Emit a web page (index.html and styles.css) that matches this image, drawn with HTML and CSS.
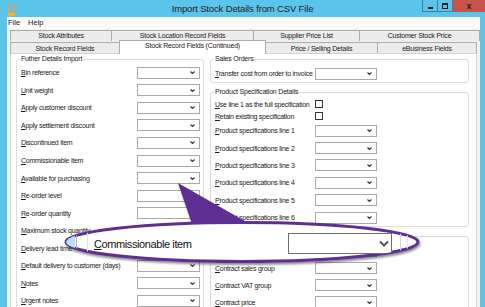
FILE: index.html
```html
<!DOCTYPE html>
<html lang="en">
<head>
  <meta charset="UTF-8" />
  <title>Import Stock Details from CSV File</title>
  <link rel="stylesheet" href="styles.css">
</head>
<body>
<div class="titlebar">
  <div class="app-icon">
    <svg width="7" height="11" viewBox="0 0 7 11">
      <rect x="0.5" y="0.5" width="6" height="7" rx="1.5" fill="none" stroke="#f0a030" stroke-width="1.4"/>
      <rect x="0" y="8" width="7" height="3" fill="#f5b040"/>
    </svg>
  </div>
  <div class="title">Import Stock Details from CSV File</div>
  <div class="win-buttons">
    <div class="wbtn wbtn-min"><span class="glyph-min"></span></div>
    <div class="wbtn wbtn-max"><span class="glyph-max"></span></div>
    <div class="wbtn wbtn-close">x</div>
  </div>
</div>

<div class="client">
  <div class="menubar">
    <span>File</span>
    <span>Help</span>
  </div>

  <div class="tabs">
    <div class="tab-row">
      <div class="tab" style="width:102px">Stock Attributes</div>
      <div class="tab" style="width:143px">Stock Location Record Fields</div>
      <div class="tab" style="width:107px">Supplier Price List</div>
      <div class="tab" style="width:121px">Customer Stock Price</div>
    </div>
    <div class="tab-row tab-row-front">
      <div class="tab" style="width:110px">Stock Record Fields</div>
      <div class="tab tab-active" style="width:147px">Stock Record Fields (Continued)</div>
      <div class="tab" style="width:113px">Price / Selling Details</div>
      <div class="tab" style="width:100px">eBusiness Fields</div>
    </div>
  </div>

  <div class="panel">
    <fieldset class="group group-left">
      <legend>Futher Details Import</legend>
      <div class="rows rows-left">
        <div class="row"><span class="lbl"><u>B</u>in reference</span><div class="combo"><svg class="chev" width="5" height="3" viewBox="0 0 5 3"><polyline points="0.5,0.5 2.5,2.5 4.5,0.5"/></svg></div></div>
        <div class="row"><span class="lbl"><u>U</u>nit weight</span><div class="combo"><svg class="chev" width="5" height="3" viewBox="0 0 5 3"><polyline points="0.5,0.5 2.5,2.5 4.5,0.5"/></svg></div></div>
        <div class="row"><span class="lbl"><u>A</u>pply customer discount</span><div class="combo"><svg class="chev" width="5" height="3" viewBox="0 0 5 3"><polyline points="0.5,0.5 2.5,2.5 4.5,0.5"/></svg></div></div>
        <div class="row"><span class="lbl"><u>A</u>pply settlement discount</span><div class="combo"><svg class="chev" width="5" height="3" viewBox="0 0 5 3"><polyline points="0.5,0.5 2.5,2.5 4.5,0.5"/></svg></div></div>
        <div class="row"><span class="lbl"><u>D</u>iscontinued item</span><div class="combo"><svg class="chev" width="5" height="3" viewBox="0 0 5 3"><polyline points="0.5,0.5 2.5,2.5 4.5,0.5"/></svg></div></div>
        <div class="row"><span class="lbl"><u>C</u>ommissionable item</span><div class="combo"><svg class="chev" width="5" height="3" viewBox="0 0 5 3"><polyline points="0.5,0.5 2.5,2.5 4.5,0.5"/></svg></div></div>
        <div class="row"><span class="lbl"><u>A</u>vailable for purchasing</span><div class="combo"><svg class="chev" width="5" height="3" viewBox="0 0 5 3"><polyline points="0.5,0.5 2.5,2.5 4.5,0.5"/></svg></div></div>
        <div class="row"><span class="lbl"><u>R</u>e-order level</span><div class="combo"></div></div>
        <div class="row"><span class="lbl"><u>R</u>e-order quantity</span><div class="combo"><svg class="chev" width="5" height="3" viewBox="0 0 5 3"><polyline points="0.5,0.5 2.5,2.5 4.5,0.5"/></svg></div></div>
        <div class="row"><span class="lbl"><u>M</u>aximum stock quantity</span><div class="combo"></div></div>
        <div class="row"><span class="lbl"><u>D</u>elivery lead time</span><div class="combo"></div></div>
        <div class="row"><span class="lbl"><u>D</u>efault delivery to customer (days)</span><div class="combo"><svg class="chev" width="5" height="3" viewBox="0 0 5 3"><polyline points="0.5,0.5 2.5,2.5 4.5,0.5"/></svg></div></div>
        <div class="row"><span class="lbl"><u>N</u>otes</span><div class="combo"><svg class="chev" width="5" height="3" viewBox="0 0 5 3"><polyline points="0.5,0.5 2.5,2.5 4.5,0.5"/></svg></div></div>
        <div class="row"><span class="lbl"><u>U</u>rgent notes</span><div class="combo"><svg class="chev" width="5" height="3" viewBox="0 0 5 3"><polyline points="0.5,0.5 2.5,2.5 4.5,0.5"/></svg></div></div>
      </div>
    </fieldset>

    <div class="col-right">
      <fieldset class="group">
        <legend>Sales Orders</legend>
        <div class="rows rows-sales">
          <div class="row row-sales"><span class="lbl"><u>T</u>ransfer cost from order to invoice</span><div class="combo"><svg class="chev" width="5" height="3" viewBox="0 0 5 3"><polyline points="0.5,0.5 2.5,2.5 4.5,0.5"/></svg></div></div>
        </div>
      </fieldset>

      <fieldset class="group">
        <legend>Product Specification Details</legend>
        <div class="rows rows-spec">
          <div class="row row-check"><span class="lbl"><u>U</u>se line 1 as the full specification</span><span class="checkbox"></span></div>
          <div class="row row-check"><span class="lbl"><u>R</u>etain existing specification</span><span class="checkbox"></span></div>
          <div class="row row-spec"><span class="lbl"><u>P</u>roduct specifications line 1</span><div class="combo"><svg class="chev" width="5" height="3" viewBox="0 0 5 3"><polyline points="0.5,0.5 2.5,2.5 4.5,0.5"/></svg></div></div>
          <div class="row row-spec"><span class="lbl"><u>P</u>roduct specifications line 2</span><div class="combo"><svg class="chev" width="5" height="3" viewBox="0 0 5 3"><polyline points="0.5,0.5 2.5,2.5 4.5,0.5"/></svg></div></div>
          <div class="row row-spec"><span class="lbl"><u>P</u>roduct specifications line 3</span><div class="combo"><svg class="chev" width="5" height="3" viewBox="0 0 5 3"><polyline points="0.5,0.5 2.5,2.5 4.5,0.5"/></svg></div></div>
          <div class="row row-spec"><span class="lbl"><u>P</u>roduct specifications line 4</span><div class="combo"><svg class="chev" width="5" height="3" viewBox="0 0 5 3"><polyline points="0.5,0.5 2.5,2.5 4.5,0.5"/></svg></div></div>
          <div class="row row-spec"><span class="lbl"><u>P</u>roduct specifications line 5</span><div class="combo"><svg class="chev" width="5" height="3" viewBox="0 0 5 3"><polyline points="0.5,0.5 2.5,2.5 4.5,0.5"/></svg></div></div>
          <div class="row row-spec"><span class="lbl"><u>P</u>roduct specifications line 6</span><div class="combo"><svg class="chev" width="5" height="3" viewBox="0 0 5 3"><polyline points="0.5,0.5 2.5,2.5 4.5,0.5"/></svg></div></div>
        </div>
      </fieldset>

      <fieldset class="group">
        <legend>Contract Details</legend>
        <div class="rows rows-contract">
          <div class="row row-contract"><span class="lbl"><u>C</u>ontract price list</span><div class="combo"><svg class="chev" width="5" height="3" viewBox="0 0 5 3"><polyline points="0.5,0.5 2.5,2.5 4.5,0.5"/></svg></div></div>
          <div class="row row-contract"><span class="lbl"><u>C</u>ontract sales group</span><div class="combo"><svg class="chev" width="5" height="3" viewBox="0 0 5 3"><polyline points="0.5,0.5 2.5,2.5 4.5,0.5"/></svg></div></div>
          <div class="row row-contract"><span class="lbl"><u>C</u>ontract VAT group</span><div class="combo"><svg class="chev" width="5" height="3" viewBox="0 0 5 3"><polyline points="0.5,0.5 2.5,2.5 4.5,0.5"/></svg></div></div>
          <div class="row row-contract"><span class="lbl"><u>C</u>ontract price</span><div class="combo"><svg class="chev" width="5" height="3" viewBox="0 0 5 3"><polyline points="0.5,0.5 2.5,2.5 4.5,0.5"/></svg></div></div>
        </div>
      </fieldset>
    </div>
  </div>
</div>

<!-- magnified callout over the form -->
<div class="callout">
  <svg class="callout-shape" width="485" height="307" viewBox="0 0 485 307">
    <defs>
      <clipPath id="inside">
        <ellipse cx="242" cy="242" rx="176" ry="19.5"/>
      </clipPath>
      <filter id="shadow" x="-10%" y="-30%" width="120%" height="170%">
        <feDropShadow dx="1" dy="2" stdDeviation="1.3" flood-color="#000" flood-opacity="0.45"/>
      </filter>
    </defs>
    <g filter="url(#shadow)">
      <polygon points="178,183 192,224 250,224" fill="#5f2f93"/>
      <ellipse cx="242" cy="242" rx="176" ry="19.5" fill="#fff" stroke="#5f2f93" stroke-width="3"/>
    </g>
    <g clip-path="url(#inside)">
      <rect x="60" y="220" width="15" height="45" fill="#b8e2f4"/>
      <line x1="76.5" y1="220" x2="76.5" y2="265" stroke="#b5b5b5"/>
      <line x1="87.5" y1="220" x2="87.5" y2="265" stroke="#e2e2e2"/>
      <line x1="400.5" y1="220" x2="400.5" y2="265" stroke="#d6d6d6"/>
      <line x1="407.5" y1="220" x2="407.5" y2="265" stroke="#e4e4e4"/>
      <rect x="288.5" y="233.5" width="103" height="20" fill="#fff" stroke="#6f6f6f"/>
      <polyline points="380,241.5 384,245.5 388,241.5" fill="none" stroke="#555" stroke-width="2"/>
    </g>
  </svg>
  <div class="callout-label"><u>C</u>ommissionable item</div>
</div>
</body>
</html>
```

FILE: styles.css
```css
body {
  margin: 0;
  width: 485px;
  height: 307px;
  overflow: hidden;
  position: relative;
  background: #5bc4ea;
  font-family: 'Liberation Sans', Arial, sans-serif;
  color: #1a1a1a;
}

.titlebar {
  height: 17px;
  display: grid;
  grid-template-columns: 1fr auto 1fr;
}

.app-icon {
  padding: 2px 0 0 8px;
}

.title {
  font-size: 9.5px;
  line-height: 17px;
  letter-spacing: -0.15px;
  color: #1e1e1e;
}

.win-buttons {
  justify-self: end;
  display: flex;
  height: 12px;
}

.wbtn {
  box-sizing: border-box;
  height: 12px;
  display: flex;
  align-items: center;
  justify-content: center;
}

.wbtn-min,
.wbtn-max {
  width: 16px;
  border: 1px solid #3d7f9e;
  border-top: none;
  margin-right: -1px;
}

.glyph-min {
  width: 5px;
  height: 2px;
  background: #111;
  margin-top: 4px;
}

.glyph-max {
  width: 4px;
  height: 3px;
  border: 1px solid #111;
  border-top-width: 2px;
}

.wbtn-close {
  width: 32px;
  margin-left: 1px;
  background: #c8534c;
  color: #222;
  font-size: 9px;
  font-weight: bold;
  line-height: 12px;
}

.client {
  margin: 0 5px 0 7px;
  height: 290px;
  background: #f3f3f3;
  overflow: hidden;
}

.menubar {
  height: 12px;
  background: #fbfbfb;
  display: flex;
  gap: 8px;
  padding-left: 1px;
  font-size: 7.5px;
  line-height: 12px;
}

.tabs {
  padding: 1px 0 0 3px;
}

.tab-row {
  display: flex;
  height: 11px;
}

.tab-row-front {
  margin-top: 1px;
}

.tab {
  box-sizing: border-box;
  flex: none;
  height: 11px;
  margin-right: -1px;
  border: 1px solid #acacac;
  border-bottom: none;
  background: #ececec;
  font-size: 7px;
  line-height: 10px;
  letter-spacing: -0.2px;
  text-align: center;
  white-space: nowrap;
}

.tab-row-front .tab {
  line-height: 11px;
}

.tab-active {
  position: relative;
  z-index: 2;
  height: 14px;
  margin-top: -2px;
  margin-bottom: -1px;
  background: #fff;
  line-height: 10px;
}

.tab-row-front .tab-active {
  line-height: 10px;
}

.panel {
  box-sizing: border-box;
  margin-left: 3px;
  width: 467px;
  height: 270px;
  background: #fff;
  border: 1px solid #d2d2d2;
  display: flex;
  gap: 6px;
  padding: 1px 7px 0 5px;
}

.group {
  margin: 0;
  padding: 0 3px 0 4px;
  min-width: 0;
  border: 1px solid #dcdcdc;
  border-radius: 3px;
}

.group legend {
  font-size: 7px;
  line-height: 8px;
  padding: 0 1px;
  margin-left: -1px;
  letter-spacing: -0.2px;
}

.group-left {
  box-sizing: border-box;
  width: 188px;
  flex: none;
  height: 290px;
}

.col-right {
  width: 259px;
  flex: none;
  display: flex;
  flex-direction: column;
  gap: 5px;
}

.col-right .group {
  box-sizing: border-box;
  width: 259px;
}

.rows-left {
  padding-top: 1px;
}

.row {
  display: grid;
  grid-template-columns: 116px 63px;
  align-items: center;
  height: 17.55px;
}

.lbl {
  font-size: 7px;
  letter-spacing: -0.25px;
  white-space: nowrap;
}

.combo {
  box-sizing: border-box;
  height: 12px;
  border: 1px solid #a9a9a9;
  background: #fff;
  display: flex;
  align-items: center;
  justify-content: flex-end;
}

.chev {
  margin-right: 4px;
  fill: none;
  stroke: #333;
  stroke-width: 1.1;
}

.rows-sales {
  padding-top: 2px;
}

.row-sales,
.row-check,
.row-spec,
.row-contract {
  grid-template-columns: 100px 62px;
}

.row-sales {
  height: 17px;
}

.rows-spec {
  padding-top: 2px;
}

.row-check {
  height: 12px;
}

.row-spec {
  height: 17.4px;
}

.checkbox {
  box-sizing: border-box;
  width: 8px;
  height: 8px;
  border: 1px solid #333;
  background: #fff;
}

.rows-contract {
  padding-top: 2.5px;
}

.row-contract {
  height: 17px;
}

.callout {
  position: absolute;
  left: 0;
  top: 0;
  width: 485px;
  height: 307px;
  pointer-events: none;
}

.callout-shape {
  display: block;
}

.callout-label {
  position: absolute;
  left: 94px;
  top: 239px;
  font-size: 11px;
  line-height: 11px;
  letter-spacing: -0.4px;
  color: #111;
}
```
